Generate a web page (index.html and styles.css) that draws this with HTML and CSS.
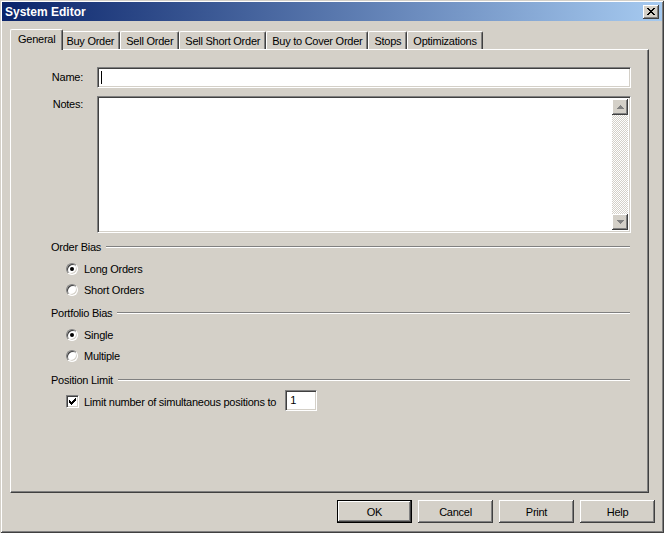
FILE: index.html
```html
<!DOCTYPE html>
<html lang="en">

<head>
    <meta charset="UTF-8">
    <meta name="viewport" content="width=device-width, initial-scale=1.0">
    <title>System Editor</title>
    <link rel="stylesheet" href="styles.css">
</head>

<body>
    <div class="window">
        <div class="titlebar">
            <span class="title">System Editor</span>
            <span class="close-btn">
                <svg width="8" height="7" viewBox="0 0 8 7">
                    <path d="M0 0h2v1h1v1h2v-1h1v-1h2v1h-1v1h-1v1h-1v1h1v1h1v1h1v1h-2v-1h-1v-1h-2v1h-1v1h-2v-1h1v-1h1v-1h1v-1h-1v-1h-1v-1h-1z" fill="#000"/>
                </svg>
            </span>
        </div>

        <div class="content">
            <div class="tabs">
                <div class="tab active">General</div>
                <div class="tab">Buy Order</div>
                <div class="tab">Sell Order</div>
                <div class="tab">Sell Short Order</div>
                <div class="tab">Buy to Cover Order</div>
                <div class="tab">Stops</div>
                <div class="tab">Optimizations</div>
            </div>

            <div class="panel">
                <div class="form-grid">
                    <label class="field-label">Name:</label>
                    <div class="textbox name-box"><span class="caret"></span></div>
                    <label class="field-label notes-label">Notes:</label>
                    <div class="textbox notes-box">
                        <div class="scrollbar">
                            <div class="scroll-btn">
                                <svg width="7" height="4" viewBox="0 0 7 4"><path d="M3 0h1v1h1v1h1v1h1v1h-7v-1h1v-1h1v-1h1z" fill="#808080"/></svg>
                            </div>
                            <div class="scroll-track"></div>
                            <div class="scroll-btn">
                                <svg width="7" height="4" viewBox="0 0 7 4"><path d="M0 0h7v1h-1v1h-1v1h-1v1h-1v-1h-1v-1h-1v-1h-1z" fill="#808080"/></svg>
                            </div>
                        </div>
                    </div>
                </div>

                <div class="group order-group">
                    <div class="group-heading"><span>Order Bias</span></div>
                    <div class="option"><span class="radio checked"></span>Long Orders</div>
                    <div class="option"><span class="radio"></span>Short Orders</div>
                </div>

                <div class="group portfolio-group">
                    <div class="group-heading"><span>Portfolio Bias</span></div>
                    <div class="option"><span class="radio checked"></span>Single</div>
                    <div class="option"><span class="radio"></span>Multiple</div>
                </div>

                <div class="group limit-group">
                    <div class="group-heading"><span>Position Limit</span></div>
                    <div class="option">
                        <span class="checkbox">
                            <svg width="7" height="7" viewBox="0 0 7 7"><path d="M6 0h1v3h-1v1h-1v1h-1v1h-1v1h-1v-1h-1v-1h-1v-3h1v1h1v1h1v-1h1v-1h1v-1h1z" fill="#000"/></svg>
                        </span>
                        Limit number of simultaneous positions to
                        <div class="textbox small-box">1</div>
                    </div>
                </div>
            </div>

            <div class="buttons">
                <button class="btn default">OK</button>
                <button class="btn">Cancel</button>
                <button class="btn">Print</button>
                <button class="btn">Help</button>
            </div>
        </div>
    </div>
</body>

</html>
```

FILE: styles.css
```css
body {
    margin: 0;
    background-color: #d4d0c8;
    font-family: "Liberation Sans", Arial, sans-serif;
    font-size: 11px;
    letter-spacing: -0.25px;
    color: #000;
}

.window {
    width: 664px;
    height: 533px;
    box-sizing: border-box;
    padding: 2px;
    display: flex;
    flex-direction: column;
    background-color: #d4d0c8;
    box-shadow: inset 1px 1px #d4d0c8, inset -1px -1px #404040,
        inset 2px 2px #fff, inset -2px -2px #808080;
}

.titlebar {
    height: 19px;
    display: flex;
    align-items: center;
    justify-content: space-between;
    padding: 0 3px;
    background: linear-gradient(to right, #0a246a, #a6caf0);
}

.title {
    color: #fff;
    font-weight: bold;
    font-size: 12px;
    letter-spacing: 0;
}

.close-btn {
    width: 16px;
    height: 14px;
    box-sizing: border-box;
    display: flex;
    align-items: center;
    justify-content: center;
    background-color: #d4d0c8;
    box-shadow: inset -1px -1px #404040, inset 1px 1px #fff,
        inset -2px -2px #808080;
}

.content {
    flex: 1;
    display: flex;
    flex-direction: column;
    padding: 8px 13px 8px 8px;
}

.tabs {
    display: flex;
    align-items: flex-end;
    padding-left: 2px;
    height: 20px;
    position: relative;
    z-index: 1;
}

.tab {
    height: 18px;
    box-sizing: border-box;
    padding: 2px 5px 0 5px;
    border-top: 1px solid #fff;
    border-left: 1px solid #fff;
    border-right: 1px solid #404040;
    border-top-left-radius: 2px;
    border-top-right-radius: 2px;
    box-shadow: inset -1px 0 #808080;
    line-height: 14px;
    white-space: nowrap;
}

.tab.active {
    height: 21px;
    margin: 0 -2px -1px -2px;
    padding: 2px 7px 0 7px;
    background-color: #d4d0c8;
    position: relative;
    z-index: 2;
}

.tab.active + .tab {
    border-left: none;
}

.panel {
    flex: 1;
    border-top: 1px solid #fff;
    border-left: 1px solid #fff;
    border-right: 1px solid #404040;
    border-bottom: 1px solid #404040;
    box-shadow: inset -1px -1px #808080;
    padding: 17px 17px 0 40px;
}

.form-grid {
    display: grid;
    grid-template-columns: 32px 1fr;
    column-gap: 14px;
    row-gap: 8px;
}

.field-label {
    text-align: right;
    padding-top: 4px;
}

.notes-label {
    padding-top: 2px;
}

.textbox {
    background-color: #fff;
    box-sizing: border-box;
    border-top: 1px solid #808080;
    border-left: 1px solid #808080;
    border-right: 1px solid #fff;
    border-bottom: 1px solid #fff;
    box-shadow: inset 1px 1px #404040, inset -1px -1px #d4d0c8;
}

.name-box {
    height: 21px;
    padding: 3px;
}

.caret {
    display: block;
    width: 1px;
    height: 13px;
    background-color: #000;
}

.notes-box {
    height: 137px;
    display: flex;
    justify-content: flex-end;
    padding: 2px;
}

.scrollbar {
    width: 16px;
    display: flex;
    flex-direction: column;
}

.scroll-btn {
    height: 16px;
    box-sizing: border-box;
    display: flex;
    align-items: center;
    justify-content: center;
    background-color: #d4d0c8;
    box-shadow: inset -1px -1px #404040, inset 1px 1px #fff,
        inset -2px -2px #808080;
}

.scroll-track {
    flex: 1;
    background: repeating-conic-gradient(#fff 0 25%, #d4d0c8 0 50%) 0 0 / 2px 2px;
}

.order-group {
    margin-top: 3px;
}

.portfolio-group {
    margin-top: 2px;
}

.limit-group {
    margin-top: 3px;
}

.group-heading {
    display: flex;
    align-items: center;
    height: 22px;
    margin-right: 1px;
}

.group-heading::after {
    content: "";
    flex: 1;
    height: 1px;
    margin-left: 5px;
    background-color: #808080;
    border-bottom: 1px solid #fff;
}

.option {
    display: flex;
    align-items: center;
    height: 21px;
    padding-left: 15px;
}

.radio {
    width: 12px;
    height: 12px;
    box-sizing: border-box;
    margin-right: 6px;
    border-radius: 50%;
    background-color: #fff;
    border: 1px solid;
    border-color: #808080 #fff #fff #808080;
    box-shadow: inset 1px 1px #404040, inset -1px -1px #d4d0c8;
    display: flex;
    align-items: center;
    justify-content: center;
}

.radio.checked::after {
    content: "";
    width: 4px;
    height: 4px;
    border-radius: 50%;
    background-color: #000;
}

.checkbox {
    width: 13px;
    height: 13px;
    box-sizing: border-box;
    margin-right: 5px;
    background-color: #fff;
    border: 1px solid;
    border-color: #808080 #fff #fff #808080;
    box-shadow: inset 1px 1px #404040, inset -1px -1px #d4d0c8;
    display: flex;
    align-items: center;
    justify-content: center;
}

.small-box {
    width: 32px;
    height: 21px;
    margin-left: 9px;
    margin-top: -3px;
    padding: 3px 4px;
}

.buttons {
    display: flex;
    justify-content: flex-end;
    gap: 6px;
    padding-top: 7px;
    margin-right: -6px;
}

.btn {
    width: 75px;
    height: 23px;
    font-family: inherit;
    font-size: 11px;
    letter-spacing: -0.25px;
    color: #000;
    background-color: #d4d0c8;
    border: none;
    padding: 0;
    box-shadow: inset -1px -1px #404040, inset 1px 1px #fff,
        inset -2px -2px #808080;
}

.btn.default {
    border: 1px solid #000;
}
```
